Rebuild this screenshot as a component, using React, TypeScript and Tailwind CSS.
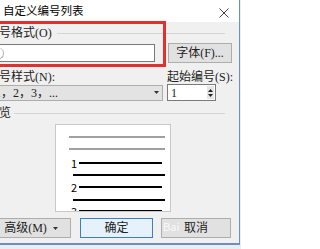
const cjk = { fontFamily: '"Liberation Serif", "Noto Sans CJK SC", serif' };
const sans = { fontFamily: '"Noto Sans CJK SC", "Liberation Sans", sans-serif' };

function Button({ label, className }: { label: React.ReactNode; className: string }) {
  return (
    <div
      className={`flex h-[20px] items-center justify-center border bg-[#e1e1e1] text-[12px] text-[#222] ${className}`}
    >
      {label}
    </div>
  );
}

function PreviewRow({ n }: { n: string }) {
  return (
    <div className="flex h-[12px] items-center">
      <span className="ml-[15px] w-[8px] text-[11px] leading-none text-black" style={sans}>
        {n}
      </span>
      <div className="h-[2px] w-[83px] bg-black" />
    </div>
  );
}

export default function App() {
  return (
    <div className="h-[249px] w-[241px] overflow-hidden bg-[#e9eef4]" style={cjk}>
      <div className="relative h-[245px] w-[240px] overflow-hidden border-b-2 border-r border-[#6d8fb8] bg-[#f0f0f0]">
        {/* title bar */}
        <div className="flex h-[22px] items-center justify-between bg-white pl-[3px] pr-[10px]">
          <span className="text-[11.5px] leading-none text-black" style={sans}>
            自定义编号列表
          </span>
          <svg width="10" height="10" viewBox="0 0 10 10" className="mt-[4px]">
            <path d="M0.5 0.5 L9.5 9.5 M9.5 0.5 L0.5 9.5" stroke="#444" strokeWidth="1" />
          </svg>
        </div>

        <div className="-ml-[13px] w-[252px] text-[12px] text-[#222]">
          {/* group: number format */}
          <div className="mt-[4px] flex h-[14px] items-center">
            <span className="leading-none">编号格式(O)</span>
            <div className="ml-[5px] mr-[14px] h-px flex-1 bg-[#d5d5d5]" />
          </div>

          <div className="mt-[3px] flex h-[20px] items-center">
            <div className="flex h-[18px] w-[168px] items-center border border-[#7a7a7a] bg-white pl-[5px]">
              <span className="text-[11px] leading-none" style={sans}>
                ①
              </span>
            </div>
            <Button label="字体(F)..." className="ml-[13px] w-[64px] border-[#adadad]" />
          </div>

          {/* style + start */}
          <div className="mt-[7px] flex h-[14px] items-center">
            <span className="w-[180px] leading-none">编号样式(N):</span>
            <span className="leading-none">起始编号(S):</span>
          </div>

          <div className="flex h-[17px] items-center">
            <div className="flex h-[16px] w-[176px] items-center justify-between border border-[#adadad] bg-[#e3e3e3] pl-[7px] pr-[3px]">
              <span className="leading-none">1，2，3，...</span>
              <svg width="5" height="3" viewBox="0 0 5 3">
                <path d="M0 0 L5 0 L2.5 3 Z" fill="#333" />
              </svg>
            </div>
            <div className="ml-[4px] flex h-[17px] w-[49px] items-center justify-between border border-[#7a7a7a] bg-white pl-[3px] pr-[1px]">
              <span className="leading-none">1</span>
              <div className="flex h-[13px] w-[7px] flex-col items-center justify-center gap-[2px] bg-[#e6e6e6]">
                <svg width="5" height="3" viewBox="0 0 5 3">
                  <path d="M0 3 L5 3 L2.5 0 Z" fill="#222" />
                </svg>
                <svg width="5" height="3" viewBox="0 0 5 3">
                  <path d="M0 0 L5 0 L2.5 3 Z" fill="#222" />
                </svg>
              </div>
            </div>
          </div>

          {/* preview */}
          <div className="mt-[5px] flex h-[14px] items-center">
            <span className="leading-none">预览</span>
            <div className="ml-[3px] mr-[14px] h-px flex-1 bg-[#d5d5d5]" />
          </div>

          <div className="ml-[68px] mt-[4px] h-[88px] w-[116px] overflow-hidden border border-[#c8c8c8] bg-white">
            <div className="ml-[13px] mt-[11px] h-[2px] w-[96px] bg-[#a0a0a0]" />
            <div className="ml-[13px] mt-[10px] h-[2px] w-[96px] bg-[#a0a0a0]" />
            <div className="mt-[7px]">
              <PreviewRow n="1" />
            </div>
            <div className="ml-[17px] mt-[5px] h-[2px] w-[92px] bg-black" />
            <div className="mt-[5px]">
              <PreviewRow n="2" />
            </div>
            <div className="ml-[17px] mt-[6px] h-[2px] w-[92px] bg-black" />
            <div className="mt-[4px]">
              <PreviewRow n="3" />
            </div>
          </div>

          {/* buttons */}
          <div className="mt-[6px] flex h-[20px] items-center">
            <Button
              label={
                <span className="flex items-center gap-[6px] pl-[4px]">
                  高级(M)
                  <svg width="5" height="3" viewBox="0 0 5 3">
                    <path d="M0 0 L5 0 L2.5 3 Z" fill="#333" />
                  </svg>
                </span>
              }
              className="w-[84px] border-[#adadad]"
            />
            <Button label="确定" className="ml-[9px] w-[73px] border-[#3d7fc6] bg-[#e5f1fb]" />
            <div className="relative ml-[8px]">
              <Button label="取消" className="w-[70px] border-[#adadad]" />
              <span className="absolute left-[2px] top-[3px] text-[11px] leading-none text-white/80" style={sans}>
                Bai
              </span>
            </div>
          </div>
        </div>

        {/* red highlight */}
        <div className="absolute left-[-10px] top-[21px] h-[46px] w-[176px] border-[3px] border-[#e0302f]" />
      </div>
    </div>
  );
}
